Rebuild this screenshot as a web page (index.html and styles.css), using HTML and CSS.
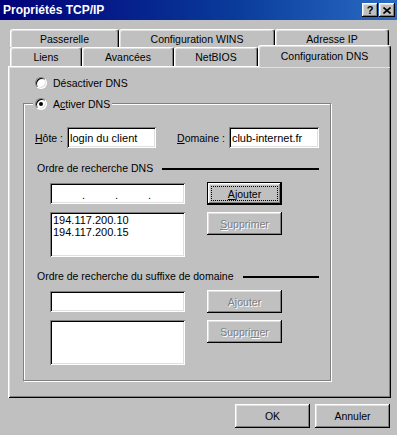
FILE: index.html
```html
<!DOCTYPE html>
<html lang="fr">
<head>
  <meta charset="UTF-8">
  <title>Propriétés TCP/IP</title>
  <link rel="stylesheet" href="styles.css">
</head>
<body>
  <div class="window">
    <div class="titlebar">
      <span class="title">Propriétés TCP/IP</span>
      <div class="title-buttons">
        <span class="tbtn">?</span>
        <span class="tbtn">
          <svg width="8" height="7" viewBox="0 0 8 7"><path d="M0.5 0.5 L7.5 6.5 M7.5 0.5 L0.5 6.5" stroke="#000" stroke-width="1.6" fill="none"/></svg>
        </span>
      </div>
    </div>

    <!-- tab strip: two rows, selected tab in the front row -->
    <div class="tabs">
      <div class="tab-row back">
        <div class="tab t-passerelle">Passerelle</div>
        <div class="tab t-wins">Configuration WINS</div>
        <div class="tab t-ip">Adresse IP</div>
      </div>
      <div class="tab-row front">
        <div class="tab t-liens">Liens</div>
        <div class="tab t-avancees">Avancées</div>
        <div class="tab t-netbios">NetBIOS</div>
        <div class="tab t-dns active">Configuration DNS</div>
      </div>
    </div>

    <div class="panel">
      <div class="radio-row">
        <span class="radio"></span>
        <span>Désactiver DNS</span>
      </div>

      <div class="group">
        <div class="legend">
          <span class="radio checked"></span>
          <span>A<u>c</u>tiver DNS</span>
        </div>

        <div class="host-row">
          <label class="lbl-host"><u>H</u>ôte :</label>
          <input class="field f-host" type="text" value="login du client">
          <label class="lbl-domain"><u>D</u>omaine :</label>
          <input class="field f-domain" type="text" value="club-internet.fr">
        </div>

        <div class="section-head">
          <span>Ordre de recherche DNS</span>
          <span class="rule"></span>
        </div>
        <div class="entry">
          <div class="entry-left">
            <div class="field ipfield">
              <span class="ip-seg"></span><span class="ip-dot">.</span>
              <span class="ip-seg"></span><span class="ip-dot">.</span>
              <span class="ip-seg"></span><span class="ip-dot">.</span>
              <span class="ip-seg"></span>
            </div>
            <div class="field listbox">
              <div>194.117.200.10</div>
              <div>194.117.200.15</div>
            </div>
          </div>
          <div class="entry-right">
            <button class="btn default"><span><u>A</u>jouter</span></button>
            <button class="btn disabled"><span><u>S</u>upprimer</span></button>
          </div>
        </div>

        <div class="section-head second">
          <span>Ordre de recherche du suffixe de domaine</span>
          <span class="rule"></span>
        </div>
        <div class="entry">
          <div class="entry-left">
            <input class="field" type="text" value="">
            <div class="field listbox"></div>
          </div>
          <div class="entry-right">
            <button class="btn disabled"><span>A<u>j</u>outer</span></button>
            <button class="btn disabled"><span>Suppri<u>m</u>er</span></button>
          </div>
        </div>
      </div>
    </div>

    <div class="footer">
      <button class="btn big">OK</button>
      <button class="btn big">Annuler</button>
    </div>
  </div>
</body>
</html>
```

FILE: styles.css
```css
* {
  box-sizing: border-box;
}
body {
  margin: 0;
  background: #c0c0c0;
  font-family: 'Liberation Sans', Arial, sans-serif;
  font-size: 10.5px;
  color: #000;
}
.window {
  width: 397px;
  height: 435px;
  overflow: hidden;
}
.titlebar {
  height: 20px;
  display: flex;
  align-items: center;
  justify-content: space-between;
  padding: 0 2px 0 3px;
  background: linear-gradient(90deg, #000078 0%, #0a3c9c 60%, #2a6cc4 100%);
}
.title {
  color: #fff;
  font-weight: bold;
  font-size: 12px;
}
.title-buttons {
  display: flex;
  gap: 1px;
}
.tbtn {
  width: 16px;
  height: 14px;
  display: flex;
  align-items: center;
  justify-content: center;
  background: #c0c0c0;
  font-weight: bold;
  font-size: 11px;
  box-shadow: inset -1px -1px #000, inset 1px 1px #fff, inset -2px -2px #808080, inset 2px 2px #dfdfdf;
}

/* tabs */
.tabs {
  margin-top: 9px;
  padding-left: 10px;
}
.tab-row {
  display: flex;
}
.tab-row.front {
  height: 19px;
  align-items: flex-end;
}
.tab {
  height: 18px;
  display: flex;
  align-items: center;
  justify-content: center;
  background: #c0c0c0;
  border: 1px solid;
  border-color: #fff #000 transparent #fff;
  border-bottom: none;
  border-radius: 3px 3px 0 0;
  box-shadow: inset -1px 0 #808080, inset 1px 1px #dfdfdf;
}
.front .tab {
  height: 19px;
}
.front .tab.active {
  height: 22px;
  margin-bottom: -1px;
  padding-bottom: 2px;
  position: relative;
  z-index: 1;
}
.t-passerelle { width: 109px; }
.t-wins { width: 156px; }
.t-ip { width: 114px; }
.t-liens { width: 72px; }
.t-avancees { width: 92px; }
.t-netbios { width: 84px; }
.t-dns { width: 133px; }

.panel {
  margin-left: 8px;
  width: 383px;
  padding: 10px 0 17px 15px;
  box-shadow: inset 1px 1px #fff, inset -1px -1px #000, inset 2px 2px #dfdfdf, inset -2px -2px #808080;
}
.radio-row {
  display: flex;
  align-items: center;
  gap: 6px;
  height: 13px;
  margin-left: 12px;
}
.radio {
  width: 12px;
  height: 12px;
  border-radius: 50%;
  background: #fff;
  border: 1px solid;
  border-color: #808080 #fff #fff #808080;
  box-shadow: inset 1px 1px #000, inset -1px -1px #dfdfdf;
  display: flex;
  align-items: center;
  justify-content: center;
}
.radio.checked::after {
  content: "";
  width: 4px;
  height: 4px;
  border-radius: 50%;
  background: #000;
}

/* group box "Activer DNS" */
.group {
  margin-top: 14px;
  width: 308px;
  border: 1px solid #808080;
  box-shadow: inset 1px 1px #fff, 1px 1px #fff;
  padding: 0 11px 15px;
}
.legend {
  display: flex;
  align-items: center;
  gap: 6px;
  width: max-content;
  height: 13px;
  margin: -7px 0 0 -2px;
  padding: 0 2px;
  background: #c0c0c0;
}
.host-row {
  display: flex;
  align-items: center;
  margin-top: 17px;
}
.lbl-host {
  margin-right: 4px;
}
.lbl-domain {
  margin: 0 4px 0 21px;
}
.field {
  height: 21px;
  border: none;
  background: #fff;
  font: inherit;
  font-size: 11px;
  color: #000;
  padding: 0 3px;
  outline: none;
  box-shadow: inset 1px 1px #808080, inset -1px -1px #fff, inset 2px 2px #000, inset -2px -2px #dfdfdf;
}
.f-host { width: 89px; }
.f-domain { width: 90px; }

.section-head {
  display: flex;
  align-items: center;
  width: 282px;
  height: 13px;
  margin: 13px 0 0 2px;
}
.section-head.second {
  margin-top: 12px;
}
.rule {
  flex: 1;
  height: 2px;
  margin: 3px 0 0 9px;
  background: #000;
}

.entry {
  display: flex;
  gap: 22px;
  margin: 8px 0 0 15px;
}
.entry-left {
  width: 135px;
  padding-top: 1px;
  display: flex;
  flex-direction: column;
  gap: 8px;
}
.entry-left .field {
  width: 135px;
}
.ipfield {
  display: flex;
  align-items: center;
  padding: 0 0 0 2px;
}
.ip-seg {
  width: 30px;
}
.ip-dot {
  width: 3px;
  text-align: center;
  line-height: 1;
  margin-top: 3px;
}
.listbox {
  height: 45px !important;
  padding: 2px 3px;
  line-height: 12px;
}
.entry-right {
  display: flex;
  flex-direction: column;
  gap: 7px;
}

/* buttons */
.btn {
  width: 75px;
  height: 23px;
  border: none;
  padding: 0;
  font: inherit;
  color: #000;
  background: #c0c0c0;
  display: flex;
  align-items: center;
  justify-content: center;
  position: relative;
  box-shadow: inset -1px -1px #000, inset 1px 1px #fff, inset -2px -2px #808080, inset 2px 2px #dfdfdf;
}
.btn.default {
  border: 1px solid #000;
}
.btn.default::before {
  content: "";
  position: absolute;
  inset: 3px;
  border: 1px dotted #000;
}
.btn.disabled {
  color: #808080;
  text-shadow: 1px 1px #fff;
}
.footer {
  display: flex;
  justify-content: flex-end;
  gap: 5px;
  padding: 6px 7px 0 0;
}
.btn.big {
  height: 24px;
}
```
